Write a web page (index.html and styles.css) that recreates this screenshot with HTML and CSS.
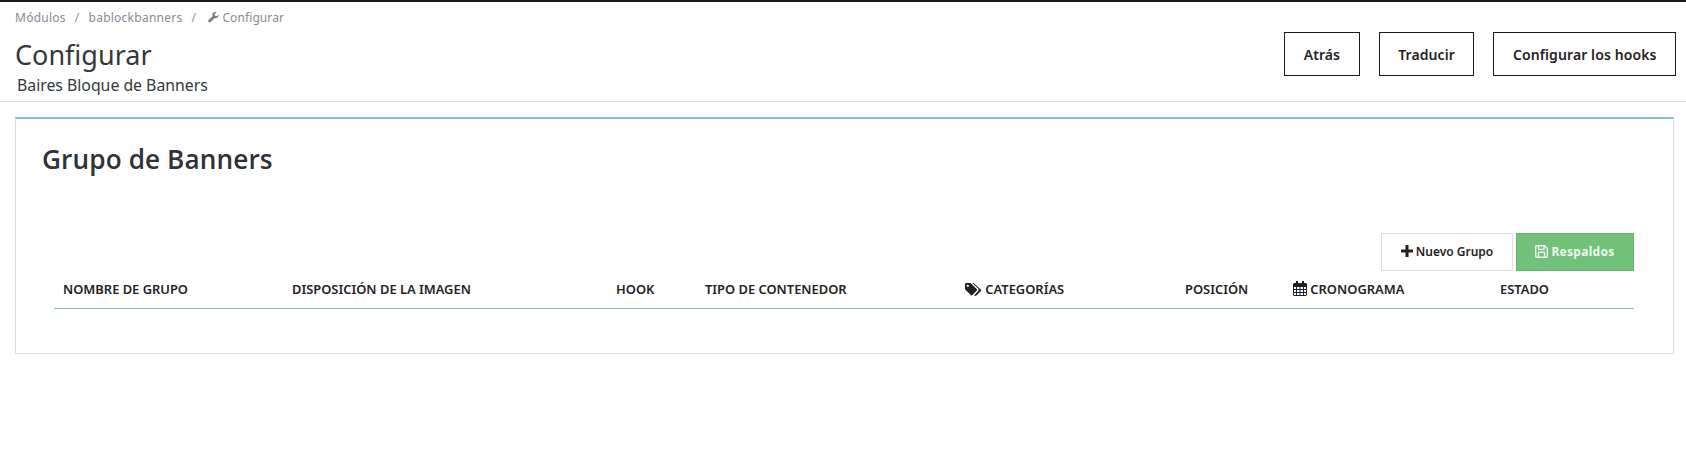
FILE: index.html
```html
<!DOCTYPE html>
<html lang="es">
<head>
    <meta charset="UTF-8">
    <title>Configurar - Baires Bloque de Banners</title>
    <link rel="stylesheet" href="styles.css">
</head>
<body>
    <header class="page-head">
        <div class="breadcrumb">
            <span>Módulos</span>
            <span class="sep">/</span>
            <span>bablockbanners</span>
            <span class="sep">/</span>
            <span class="crumb-current">
                <svg class="icon-wrench" viewBox="0 0 12 12"><path d="M11.6 2.6 9.5 4.6 7.6 4.2 7.2 2.4 9.3.4C7.9-.2 6.3.2 5.5 1.2 4.7 2.1 4.6 3.4 5 4.4L.6 8.8C0 9.4 0 10.4.6 11 1.200 11.600 2.200 11.600 2.800 11L7.200 6.700C8.300 7.100 9.500 6.900 10.400 6.100 11.400 5.200 11.900 3.900 11.600 2.600Z"/></svg>
                Configurar
            </span>
        </div>
        <div class="head-row">
            <div>
                <h1>Configurar</h1>
                <div class="subtitle">Baires Bloque de Banners</div>
            </div>
            <div class="head-actions">
                <a class="btn-outline">Atrás</a>
                <a class="btn-outline">Traducir</a>
                <a class="btn-outline">Configurar los hooks</a>
            </div>
        </div>
    </header>

    <section class="panel">
        <h2>Grupo de Banners</h2>
        <div class="panel-actions">
            <a class="btn-new">
                <svg class="icon-plus" viewBox="0 0 12 12"><path d="M4.500 0H7.500V4.500H12V7.500H7.500V12H4.500V7.500H0V4.500H4.500Z"/></svg>
                Nuevo Grupo
            </a>
            <a class="btn-backup">
                <svg class="icon-save" viewBox="0 0 14 14"><path fill-rule="evenodd" d="M1.500 0H10.500L14 3.500V12.500C14 13.300 13.300 14 12.500 14H1.500C.7 14 0 13.300 0 12.500V1.500C0 .7.7 0 1.500 0ZM1.500 1.500V12.500H3V8C3 7.400 3.400 7 4 7H10C10.600 7 11 7.400 11 8V12.500H12.500V4.100L10.500 2V4.500C10.500 5.100 10.100 5.500 9.500 5.500H4C3.400 5.500 3 5.100 3 4.500V1.500ZM4.500 1.500V4H9V1.500ZM4.500 8.500V12.500H9.500V8.500Z"/></svg>
                Respaldos
            </a>
        </div>
        <table class="groups">
            <thead>
                <tr>
                    <th class="col-name">Nombre de grupo</th>
                    <th class="col-layout">Disposición de la imagen</th>
                    <th class="col-hook">Hook</th>
                    <th class="col-type">Tipo de contenedor</th>
                    <th class="col-cats">
                        <svg class="icon-tags" viewBox="0 0 17 13"><path d="M0 1.300C0 .6.6 0 1.300 0H5.600L11.600 6C12.100 6.500 12.100 7.300 11.600 7.800L7.500 12C7 12.500 6.200 12.500 5.700 12L0 6.200ZM2.800 1.800A1.100 1.100 0 1 0 2.800 4 1.100 1.100 0 1 0 2.800 1.800Z" fill-rule="evenodd"/><path d="M7.200 0H8.600L15.800 6.500C16.300 7 16.300 7.800 15.800 8.300L11.400 12.600C10.900 13 10.200 13 9.600 12.600L9.200 12.200 13.300 7.900C13.800 7.200 13.800 6.200 13.200 5.600Z"/></svg>
                        Categorías
                    </th>
                    <th class="col-pos">Posición</th>
                    <th class="col-sched">
                        <svg class="icon-cal" viewBox="0 0 14 15"><path fill-rule="evenodd" d="M3 0H5V2H9V0H11V2H12.500C13.300 2 14 2.700 14 3.500V13.500C14 14.300 13.300 15 12.500 15H1.500C.7 15 0 14.300 0 13.500V3.500C0 2.700.7 2 1.500 2H3ZM1 6V8H3V6ZM4 6V8H6.500V6ZM7.500 6V8H10V6ZM11 6V8H13V6ZM1 9V11H3V9ZM4 9V11H6.500V9ZM7.500 9V11H10V9ZM11 9V11H13V9ZM1 12V14H3V12ZM4 12V14H6.500V12ZM7.500 12V14H10V12ZM11 12V14H13V12Z"/></svg>
                        Cronograma
                    </th>
                    <th class="col-state">Estado</th>
                </tr>
            </thead>
        </table>
    </section>
</body>
</html>
```

FILE: styles.css
```css
* {
    box-sizing: border-box;
}

body {
    margin: 0;
    background: #fff;
    border-top: 2px solid #1a1a1a;
    font-family: "Noto Sans", sans-serif;
    color: #33383c;
}

.page-head {
    height: 100px;
    padding: 0 0 0 15px;
    border-bottom: 1px solid #dcdfdf;
}

.breadcrumb {
    display: flex;
    align-items: center;
    height: 30px;
    font-size: 12px;
    letter-spacing: .25px;
    color: #868b90;
}

.sep {
    margin: 0 9px;
    color: #8a9a7d;
}

.crumb-current {
    margin-left: 3px;
    letter-spacing: .1px;
}

.icon-wrench {
    width: 11px;
    height: 11px;
    fill: #808080;
    vertical-align: -1px;
}

.head-row {
    display: flex;
    justify-content: space-between;
}

h1 {
    margin: 6px 0 0;
    font-size: 27px;
    font-weight: 400;
    line-height: 34px;
}

.subtitle {
    margin: 3px 0 0 2px;
    font-size: 15.8px;
    line-height: 20px;
}

.head-actions {
    display: flex;
    gap: 19px;
    padding-right: 10px;
}

.btn-outline {
    display: flex;
    align-items: center;
    height: 44px;
    padding: 0 18.5px;
    border: 1px solid #1a1a1a;
    font-size: 14px;
    font-weight: 600;
    letter-spacing: .1px;
    color: #1f2225;
}

.panel {
    height: 237px;
    margin: 15px 12px 0 15px;
    padding: 0 0 0 26px;
    border: 1px solid #dcdfdf;
    border-top: 2px solid #8bbccb;
}

h2 {
    margin: 24px 0 0;
    font-family: "Open Sans", sans-serif;
    font-size: 26.2px;
    font-weight: 600;
    letter-spacing: .1px;
    line-height: 32px;
    color: #2f3337;
}

.panel-actions {
    display: flex;
    justify-content: flex-end;
    gap: 3px;
    width: 1580px;
    margin: 58px 0 0 12px;
}

.panel-actions a {
    display: flex;
    align-items: center;
    justify-content: center;
    gap: 3px;
    height: 38px;
    padding-bottom: 2px;
    font-size: 12px;
    font-weight: 600;
}

.btn-new {
    width: 132px;
    border: 1px solid #dcdfdf;
    color: #1f2225;
}

.panel-actions .btn-backup {
    width: 118px;
    background: #71c17a;
    border: 1px solid #68b671;
    font-weight: 700;
    letter-spacing: .3px;
    color: #eef8ef;
}

.icon-plus {
    width: 12px;
    height: 12px;
    fill: #1f2225;
}

.icon-save {
    width: 13px;
    height: 13px;
    fill: #eef8ef;
}

.groups {
    width: 1580px;
    margin-left: 12px;
    border-collapse: collapse;
    table-layout: fixed;
}

.groups th {
    height: 37px;
    padding: 0 9px;
    border-bottom: 1px solid #85b8d3;
    text-align: left;
    font-size: 12.9px;
    font-weight: 600;
    text-transform: uppercase;
    color: #1f2225;
}

.groups svg {
    fill: #1f2225;
    vertical-align: -2px;
}

.col-name { width: 229px; }
.col-layout { width: 324px; }
.col-hook { width: 89px; }
.col-type { width: 260px; }
.col-cats { width: 220px; }
.col-pos { width: 108px; }
.col-sched { width: 207px; }
.col-state { width: 143px; }

.icon-tags {
    width: 17px;
    height: 13px;
}

.icon-cal {
    width: 14px;
    height: 15px;
}
```
